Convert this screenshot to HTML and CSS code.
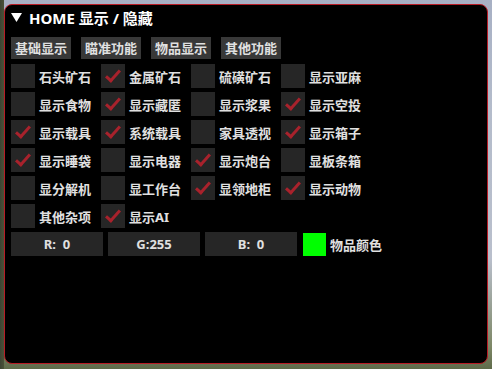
FILE: index.html
```html
<!DOCTYPE html>
<html>
<head>
<meta charset="utf-8">
<link rel="stylesheet" href="styles.css">
</head>
<body>
<div class="window">
  <div class="title">
    <svg class="arrow" width="11" height="9" viewBox="0 0 11 9"><polygon points="0,0 11,0 5.5,9" fill="#fff"/></svg>
    <span>HOME 显示 / 隐藏</span>
  </div>
  <div class="tabs">
    <div class="tab">基础显示</div>
    <div class="tab">瞄准功能</div>
    <div class="tab">物品显示</div>
    <div class="tab">其他功能</div>
  </div>
  <div class="grid">
    <div class="item"><span class="box"></span><span>石头矿石</span></div>
    <div class="item"><span class="box on"></span><span>金属矿石</span></div>
    <div class="item"><span class="box"></span><span>硫磺矿石</span></div>
    <div class="item"><span class="box"></span><span>显示亚麻</span></div>

    <div class="item"><span class="box"></span><span>显示食物</span></div>
    <div class="item"><span class="box on"></span><span>显示藏匿</span></div>
    <div class="item"><span class="box"></span><span>显示浆果</span></div>
    <div class="item"><span class="box on"></span><span>显示空投</span></div>

    <div class="item"><span class="box on"></span><span>显示载具</span></div>
    <div class="item"><span class="box on"></span><span>系统载具</span></div>
    <div class="item"><span class="box"></span><span>家具透视</span></div>
    <div class="item"><span class="box on"></span><span>显示箱子</span></div>

    <div class="item"><span class="box on"></span><span>显示睡袋</span></div>
    <div class="item"><span class="box"></span><span>显示电器</span></div>
    <div class="item"><span class="box on"></span><span>显示炮台</span></div>
    <div class="item"><span class="box"></span><span>显板条箱</span></div>

    <div class="item"><span class="box"></span><span>显分解机</span></div>
    <div class="item"><span class="box"></span><span>显工作台</span></div>
    <div class="item"><span class="box on"></span><span>显领地柜</span></div>
    <div class="item"><span class="box on"></span><span>显示动物</span></div>

    <div class="item"><span class="box"></span><span>其他杂项</span></div>
    <div class="item"><span class="box on"></span><span>显示AI</span></div>
  </div>
  <div class="colors">
    <div class="val">R:&nbsp;&nbsp;0</div>
    <div class="val">G:255</div>
    <div class="val">B:&nbsp;&nbsp;0</div>
    <div class="swatch"></div>
    <span class="clabel">物品颜色</span>
  </div>
</div>
</body>
</html>
```
FILE: styles.css
```css
html, body {
  margin: 0;
  padding: 0;
}
body {
  width: 492px;
  height: 369px;
  overflow: hidden;
  background:
    linear-gradient(to right, #3d4433 0, #4a5238 4px, transparent 4px),
    linear-gradient(to bottom, #a7b0c4 0, #b4bccb 30%, #b9bfcc 70%, #7d8766 94%, #5f6b4a 100%);
  font-family: "Noto Sans", "Noto Sans CJK SC", sans-serif;
}
.window {
  margin: 4px 0 0 4px;
  width: 484px;
  height: 360px;
  box-sizing: border-box;
  border: 1px solid #b81c26;
  border-radius: 8px;
  background: #000;
  padding: 2px 6px 0 6px;
  color: #e2e2e2;
}
.title {
  height: 20px;
  display: flex;
  align-items: center;
  gap: 7px;
  font-size: 15px;
  font-weight: 700;
  color: #fff;
}
.arrow {
  display: block;
}
.tabs {
  margin-top: 10px;
  display: flex;
  gap: 10px;
}
.tab {
  height: 22px;
  line-height: 22px;
  padding: 0 4px;
  background: #383838;
  font-size: 13px;
  font-weight: 700;
  color: #e0e0e0;
}
.grid {
  margin-top: 5px;
  display: grid;
  grid-template-columns: repeat(4, 90px);
  row-gap: 4px;
}
.item {
  display: flex;
  align-items: center;
  gap: 4px;
  height: 24px;
  font-size: 13px;
  font-weight: 700;
  color: #e0e0e0;
}
.box {
  width: 24px;
  height: 24px;
  background: #262626;
  flex: none;
  position: relative;
}
.box.on::after {
  content: "";
  position: absolute;
  left: 8px;
  top: 3px;
  width: 5px;
  height: 12px;
  border-right: 3px solid #a8222c;
  border-bottom: 3px solid #a8222c;
  transform: rotate(42deg);
  transform-origin: center;
}
.colors {
  margin-top: 4px;
  display: flex;
  align-items: center;
  height: 24px;
  font-size: 13px;
  font-weight: 700;
  color: #e0e0e0;
}
.val {
  width: 92px;
  height: 24px;
  line-height: 24px;
  background: #262626;
  text-align: center;
  margin-right: 5px;
}
.swatch {
  margin-left: 1px;
  width: 23px;
  height: 23px;
  background: #00ff00;
}
.clabel {
  margin-left: 4px;
}
```
